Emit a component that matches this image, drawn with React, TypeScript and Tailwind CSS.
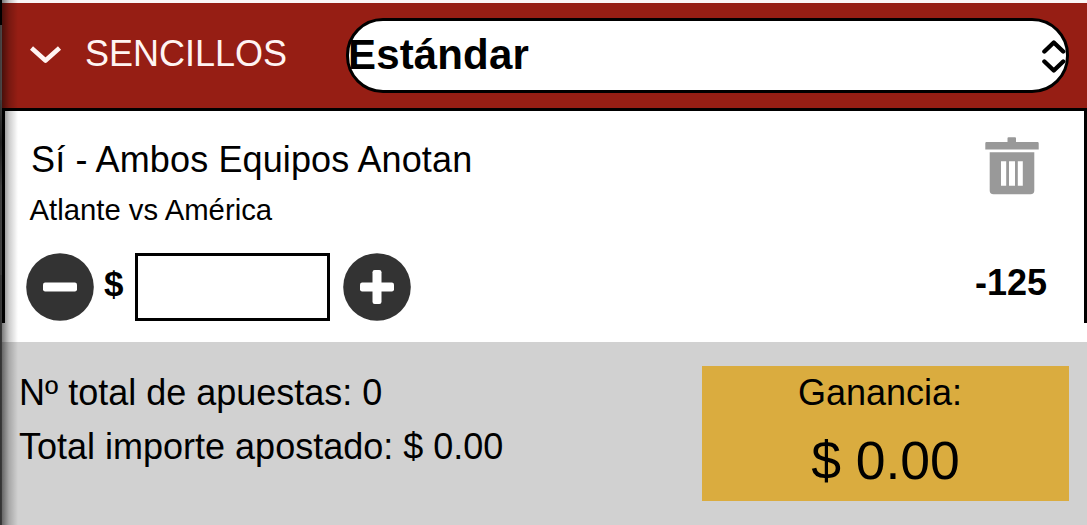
import { useState } from 'react';

interface IStepButtonProps {
    label: string;
    plus?: boolean;
    onClick: () => void;
}

function StepButton(props: IStepButtonProps) {
    return (
        <button type="button" aria-label={props.label} onClick={props.onClick} className="size-[68px] shrink-0">
            <svg viewBox="0 0 68 68" className="size-full">
                <circle cx="34" cy="34" r="33.8" fill="#333333" />
                <rect x="17" y="29.5" width="34" height="9" rx="2.2" fill="#ffffff" />
                {props.plus && <rect x="29.5" y="17" width="9" height="34" rx="2.2" fill="#ffffff" />}
            </svg>
        </button>
    );
}

function TrashIcon() {
    return (
        <svg viewBox="0 0 54 58" className="h-[58px] w-[54px]" fill="#999999">
            <path d="M22.5 5V1.2Q22.5.2 23.5.2H30Q31 .2 31 1.2V5H52.5Q53.7 5 53.7 6.2V12.5H.3V6.2Q.3 5 1.5 5Z" />
            <path
                fillRule="evenodd"
                d="M4.7 15.3H49.3V53.5Q49.3 57.3 45.5 57.3H8.5Q4.7 57.3 4.7 53.5ZM16 24.2V48.8H21.2V24.2ZM24 24.2V48.8H30V24.2ZM32.8 24.2V48.8H37.8V24.2Z"
            />
        </svg>
    );
}

function PageEdge() {
    return (
        <div className="flex w-0.5 shrink-0 flex-col">
            <div className="h-[25px] bg-black" />
            <div className="h-[75px] bg-[#a09696]" />
            <div className="h-[85px] bg-linear-to-b from-[#8b8b8b] via-[#4a4a4a] to-[#8b8b8b]" />
            <div className="h-[90px] bg-[#8f8f8f]" />
            <div className="flex-1 bg-[#7c7c7c]" />
        </div>
    );
}

export default function App() {
    const [amount, setAmount] = useState('');

    function step(delta: number) {
        setAmount(String(Math.max(0, Number(amount) + delta)));
    }

    return (
        <div className="relative flex h-[525px] w-[1087px] overflow-hidden bg-white font-['Liberation_Sans',Arial,sans-serif] text-4xl text-black">
            <PageEdge />

            <div className="flex min-w-0 flex-1 flex-col">
                <header className="flex h-[111px] items-start border-t-[3px] border-b-[3px] border-t-[#faf6f6] border-b-black bg-[#961e14] pl-7">
                    <svg viewBox="0 0 32 20" className="mt-[41px] h-5 w-8" fill="none" stroke="#fff4f2" strokeWidth="4.6" strokeLinejoin="round">
                        <path d="M1.5 4L15.5 16.5L29.5 4" />
                    </svg>
                    <h1 className="mt-[31px] ml-[23px] w-[261px] leading-10 text-[#fff4f2]">SENCILLOS</h1>
                    <button type="button" className="mt-[15px] flex h-[75px] w-[723px] items-center justify-between rounded-[37px] border-3 border-black bg-white">
                        <span className="-ml-px pb-0.5 text-[42px] leading-none font-bold tracking-[0.15px]">Estándar</span>
                        <svg viewBox="0 0 24 34" className="h-[34px] w-6" fill="none" stroke="#000000" strokeWidth="4.4" strokeLinecap="round" strokeLinejoin="round">
                            <path d="M2.4 12.5L11.8 3.5L21.2 12.5M2.4 22.5L11.8 31.5L21.2 22.5" />
                        </svg>
                    </button>
                </header>

                <section className="flex h-[212px] justify-between border-x-[3px] border-black pr-[37px] pl-[21px]">
                    <div>
                        <h2 className="mt-[29px] ml-[5px] leading-10 tracking-[0.12px]">Sí - Ambos Equipos Anotan</h2>
                        <p className="mt-3 ml-[3.5px] text-[29.3px] leading-9">Atlante vs América</p>
                        <div className="mt-[25px] flex h-[68px] items-center">
                            <StepButton label="Restar" onClick={() => step(-1)} />
                            <label htmlFor="amount" className="mb-1.5 ml-2.5 w-[31px] text-[35px] font-bold">$</label>
                            <input
                                id="amount"
                                value={amount}
                                onChange={(e) => setAmount(e.target.value)}
                                className="mr-[13px] h-[68px] w-[195px] border-3 border-black px-3 outline-none"
                            />
                            <StepButton label="Sumar" plus onClick={() => step(1)} />
                        </div>
                    </div>
                    <div className="flex flex-col items-end">
                        <button type="button" aria-label="Eliminar" className="mt-[26px] mr-2">
                            <TrashIcon />
                        </button>
                        <span className="mt-[68px] leading-10 font-bold">-125</span>
                    </div>
                </section>

                <footer className="mt-[19px] flex flex-1 justify-between bg-[#d1d1d1] pt-6 pr-[18px] pl-[17px]">
                    <div className="leading-[54px]">
                        <p>Nº total de apuestas: 0</p>
                        <p>Total importe apostado: $ 0.00</p>
                    </div>
                    <div className="flex h-[135px] w-[367px] flex-col items-center bg-[#daac3f]">
                        <span className="pr-[11px] leading-[54px]">Ganancia:</span>
                        <span className="text-[53.5px] leading-[82px]">$ 0.00</span>
                    </div>
                </footer>
            </div>

            <div className="pointer-events-none absolute inset-y-0 left-0 w-[18px] bg-linear-to-r from-black/60 via-black/20 to-transparent" />
        </div>
    );
}
